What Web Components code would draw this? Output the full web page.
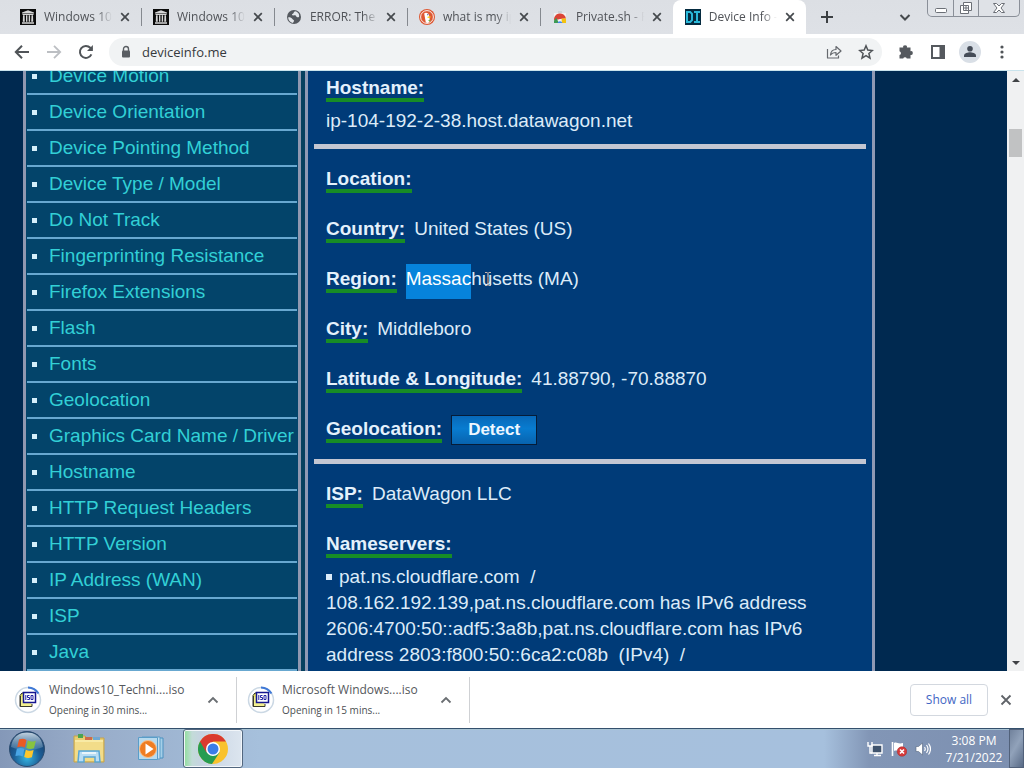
<!DOCTYPE html>
<html lang="en">
<head>
<meta charset="utf-8">
<title>Device Info</title>
<style>
html, body { margin: 0; height: 100%; }
body { font-family: "Open Sans", "Noto Sans", sans-serif; overflow: hidden; background: #002850; }
</style>
</head>
<body>
<desktop-screen></desktop-screen>
<script>
const BUTTON_RESET = `button { font: inherit; color: inherit; background: none; border: 0; padding: 0; margin: 0; }`;

function define(name, render) {
  customElements.define(name, class extends HTMLElement {
    connectedCallback() {
      if (this.shadowRoot) return;
      const template = document.createElement('template');
      template.innerHTML = render(this);
      this.attachShadow({ mode: 'open' }).append(template.content.cloneNode(true));
    }
  });
}

const ICONS = {
  archive: `<svg viewBox="0 0 16 16" width="16" height="16"><rect width="16" height="16" fill="#0b0b0b"/><g fill="#d6d6d6"><path d="M8 1.2 14 3.6V4.4H2V3.6z"/><path d="M2.5 5h11v1h-11zM3 6.3h1.6l.2 6.4H2.8zM6 6.3h1.4v6.4H6zM8.7 6.3h1.4v6.4H8.7zM11.5 6.3H13l.2 6.4h-2zM2 13.3h12v1.5H2z"/></g></svg>`,
  globe: `<svg viewBox="0 0 16 16" width="16" height="16"><circle cx="8" cy="8" r="7" fill="#55595f"/><path d="M9 2.2c-1.8.8-.9 2.3-2.6 2.8-.8.3-.3 1.6.8 1.5 1.4-.2 2.7-.3 3 .7.3 1 1.5 1.4 2.8.9.8-3-.9-5.2-4-5.9zM2.2 8.3c1.5-.2 3.4.2 4.2 1.6.5 1 2 .8 1.7 2.2-.3 1-1.2 1-.9 1.9-3-.3-5-2.7-5-5.7z" fill="#e3e6ea"/></svg>`,
  duck: `<svg viewBox="0 0 16 16" width="16" height="16"><circle cx="8" cy="8" r="8" fill="#de5833"/><circle cx="8" cy="8" r="6.4" fill="none" stroke="#fff" stroke-width=".9"/><path d="M5.2 4.5c1-1.6 4.6-1 4.9 2l.3 2.2c1 4-.5 4.8-1.7 5.2L6.8 13.6z" fill="#fff"/><path d="M8.5 7.8c1.5-.5 3-.3 3.4 0 .2.5-1.3 1.2-3.2 1.2z" fill="#fdd20a"/><circle cx="8.8" cy="5.7" r=".6" fill="#2d4f8e"/><path d="m9 11.2 2.2-.8v2.3z" fill="#65bc46"/></svg>`,
  store: `<svg viewBox="0 0 16 16" width="16" height="16"><path d="M2 4h12v10H2z" fill="#f1f1f1"/><path d="M6 2h4v2H6z" fill="#cfd2d6"/><path d="M2 11.5A6 6 0 0 1 14 9.5L8 10z" fill="#db4437"/><path d="M2 14v-2.5l2.2-2.8L7 14z" fill="#3d9a53"/><path d="M14 14V9.5H9.5L10 14z" fill="#f4c20d"/><path d="M5.5 14a2.7 2.7 0 0 1 5 0z" fill="#4285f4"/></svg>`,
  device: `<svg viewBox="0 0 16 16" width="16" height="16"><rect width="16" height="16" fill="#052b40"/><path d="M1 2h4.600L8 4.500v7L5.600 14H1zM3 4v8h1.800l1.200-1.200V5.200L4.800 4zM9 2h6v2h-2v8h2v2H9v-2h2V4H9z" fill="#2bb9da" fill-rule="evenodd"/></svg>`,
  close: `<svg viewBox="0 0 10 10" width="10" height="10"><path d="m1.200 1.200 7.600 7.600m0-7.600L1.200 8.800" stroke="currentColor" stroke-width="1.700" fill="none"/></svg>`,
  bigclose: `<svg viewBox="0 0 12 12" width="12" height="12"><path d="m1.500 1.500 9 9m0-9-9 9" stroke="#5f6368" stroke-width="1.800" fill="none"/></svg>`,
  plus: `<svg viewBox="0 0 14 14" width="14" height="14"><path d="M7 1v12M1 7h12" stroke="#3c4043" stroke-width="2"/></svg>`,
  down: `<svg viewBox="0 0 12 12" width="12" height="12"><path d="m1.500 4 4.500 4.500L10.500 4" stroke="#45494d" stroke-width="2" fill="none"/></svg>`,
  up: `<svg viewBox="0 0 12 12" width="12" height="12"><path d="M1.500 8.500 6 4l4.500 4.500" stroke="#6a6e72" stroke-width="1.800" fill="none"/></svg>`,
  back: `<svg viewBox="0 0 16 16" width="16" height="16"><path d="M15 8H2.500M8 1.800 1.800 8 8 14.200" stroke="#505458" stroke-width="2" fill="none"/></svg>`,
  forward: `<svg viewBox="0 0 16 16" width="16" height="16"><path d="M1 8h12.500M8 1.800 14.200 8 8 14.200" stroke="#bcbfc3" stroke-width="1.800" fill="none"/></svg>`,
  reload: `<svg viewBox="0 0 16 16" width="16" height="16"><path d="M13.400 10.400A6 6 0 1 1 12.300 3.800L14 5.500" stroke="#505458" stroke-width="2" fill="none"/><path d="M14.900 1v6H9z" fill="#505458"/></svg>`,
  lock: `<svg viewBox="0 0 10 14" width="10" height="14"><path d="M2.500 6V4a2.500 2.500 0 0 1 5 0v2" stroke="#5a5e63" stroke-width="1.400" fill="none"/><rect x="1" y="5.500" width="8" height="7" rx="1" fill="#5a5e63"/></svg>`,
  share: `<svg viewBox="0 0 16 16" width="16" height="16"><path d="M1.500 5v9h11v-2.500M4.500 11c.3-3.500 2.200-5.400 5.500-5.500V2.500l5 4.500-5 4.300V8.500c-2.500 0-4.200.7-5.500 2.500z" stroke="#66696e" stroke-width="1.200" fill="none" stroke-linejoin="round"/></svg>`,
  star: `<svg viewBox="0 0 16 16" width="16" height="16"><path d="m8 1.800 1.800 4.300 4.600.4-3.500 3 1.100 4.600L8 11.700l-4 2.400 1.100-4.600-3.500-3 4.600-.4z" stroke="#505458" stroke-width="1.500" fill="none"/></svg>`,
  puzzle: `<svg viewBox="0 0 16 16" width="16" height="16"><path d="M1.500 3.500h3.700a1.900 1.900 0 1 1 3.700 0h3.600v3.700a1.900 1.900 0 1 1 0 3.700v3.600H8.800a1.900 1.900 0 0 0-3.600 0H1.500V11a1.900 1.900 0 0 0 0-3.700z" fill="#55595e"/></svg>`,
  panel: `<svg viewBox="0 0 14 14" width="14" height="14"><path d="M1 1h12v12H1z" stroke="#55595e" stroke-width="2" fill="none"/><path d="M8.500 1H13v12H8.500z" fill="#55595e"/></svg>`,
  avatar: `<svg viewBox="0 0 22 22" width="22" height="22"><circle cx="11" cy="11" r="11" fill="#d9dfe6"/><circle cx="11" cy="7.800" r="2.800" fill="#454c57"/><path d="M5 16v-1.500c0-2 4-3.200 6-3.200s6 1.200 6 3.200V16z" fill="#454c57"/></svg>`,
  dots: `<svg viewBox="0 0 4 14" width="4" height="14"><g fill="#505458"><circle cx="2" cy="2" r="1.600"/><circle cx="2" cy="7" r="1.600"/><circle cx="2" cy="12" r="1.600"/></g></svg>`,
  minimize: `<svg viewBox="0 0 14 14" width="14" height="14"><rect x="1.500" y="7.500" width="11" height="4" rx="1" fill="#fff" stroke="#6b6f76"/></svg>`,
  restore: `<svg viewBox="0 0 14 14" width="14" height="14"><path d="M4.500 1.500h8v8h-3v3h-8v-8h3z" fill="#fff" stroke="#6b6f76"/><path d="M4.500 4.500h5v5h-5zM6 6h2v2H6z" fill="none" stroke="#6b6f76"/></svg>`,
  shut: `<svg viewBox="0 0 14 12" width="14" height="12"><path d="M1.500 1.500h3L7 4l2.500-2.500h3L9 6l3.500 4.500h-3L7 8l-2.500 2.500h-3L5 6z" fill="#fff" stroke="#6b6f76"/></svg>`,
  iso: `<svg viewBox="0 0 28 28" width="28" height="28"><circle cx="14" cy="14" r="12.500" fill="#fff" stroke="#cbd8e4" stroke-width="1.500"/><path d="M14 1.500A12.500 12.500 0 0 1 24.500 7.500" fill="none" stroke="#3f79d6" stroke-width="2"/><path d="M6 9.500 8 7h3v13.500H6z" fill="#e9e45c" stroke="#2c2c25"/><path d="M6.500 10v10.500H18V18" fill="#f3f08e" stroke="#3a3a2c"/><rect x="9.500" y="6.500" width="12" height="10" fill="#fff" stroke="#16168f" stroke-width="1.500"/><path d="M11.800 9v5m3.700-4.500h-2v2h2v2h-2.200m3.700-4h2v4h-2z" stroke="#2222a5" fill="none"/></svg>`,
  start: `<svg viewBox="0 0 38 38" width="38" height="38"><defs><radialGradient id="orb" cx=".5" cy=".75" r=".75"><stop offset="0" stop-color="#35b5e2"/><stop offset=".5" stop-color="#1c5e96"/><stop offset="1" stop-color="#173862"/></radialGradient><linearGradient id="gloss" x2="0" y2="1"><stop offset="0" stop-color="#dfecf5" stop-opacity=".85"/><stop offset="1" stop-color="#a8c8dc" stop-opacity=".2"/></linearGradient></defs><circle cx="19" cy="19" r="17.500" fill="url(#orb)" stroke="#2b4c70"/><path d="M3 17C4 7 11 2.500 19 2.500S34 7 35 17c-9 4-23 4-32 0z" fill="url(#gloss)"/><path d="M11 9.500c3-1.200 5-1 7.500.4l-1.700 7.600c-2.300-1.300-4.500-1.500-7.600-.3z" fill="#ea5a25"/><path d="M19.800 10.500c2.600 1.300 4.600 1.400 8 .2L26 18.200c-3 1.200-5.200 1-7.700-.2z" fill="#87c340"/><path d="M8.800 18.700c3-1.200 5.300-1 7.600.3L14.700 26.500c-2.400-1.300-4.500-1.400-7.300-.4z" fill="#49a5e5"/><path d="M17.800 19.700c2.500 1.200 4.700 1.400 7.800.2L23.900 27.300c-3 1.200-5.200 1-7.700-.3z" fill="#fdc72c"/></svg>`,
  explorer: `<svg viewBox="0 0 34 32" width="34" height="32"><path d="M2 3h11l2 2h17v24H2z" fill="#e8cd71" stroke="#c5a34b"/><path d="M6 1h5v4H6z" fill="#4aa352"/><path d="M13 4h7v3h-7z" fill="#ce6b4b"/><path d="M21 4h7v4h-7z" fill="#70a8d2"/><path d="M3 7h28v12H3z" fill="#f8eaa5"/><path d="M3 9h28v19H3z" fill="#f2dc89"/><path d="M7 18h20l1 11h-5v-5H12v5H6z" fill="#b9ddf3" stroke="#58a6d6" stroke-width="1.500"/><path d="M10 20h14" stroke="#e9f5fb" stroke-width="2"/></svg>`,
  player: `<svg viewBox="0 0 28 28" width="28" height="28"><path d="M8 3h18v20H8z" fill="#a5cfe8" stroke="#4b91c0"/><path d="M5 2h18v22H5z" fill="#c3e0f1" stroke="#5a9dc8"/><path d="M1.500 2.500h19v22h-19z" fill="#b7daee" stroke="#5a9dc8"/><circle cx="11" cy="14" r="8.500" fill="#ef7d22" stroke="#f6c18e"/><path d="m8.500 8.500 8 5.500-8 5.500z" fill="#fff"/></svg>`,
  chrome: `<svg viewBox="0 0 30 30" width="30" height="30"><circle cx="15" cy="15" r="15" fill="#f9c22d"/><path d="M15 15 2 7.500A15 15 0 0 0 14 30L21.500 18.500z" fill="#269c51"/><path d="M2 7.500A15 15 0 0 1 28 7.500H15l-6.500 11z" fill="#da3a2f"/><circle cx="15" cy="15" r="7" fill="#fff"/><circle cx="15" cy="15" r="5.500" fill="#3b7de8"/></svg>`,
  network: `<svg viewBox="0 0 16 16" width="16" height="16"><path d="M5 4h10v8H5z" fill="#40546e" stroke="#fff" stroke-width="1.400"/><path d="M7 14.500h7M10 12v3M1 1v4h4V1M3 5v7h2" stroke="#fff" stroke-width="1.400" fill="none"/></svg>`,
  flag: `<svg viewBox="0 0 16 16" width="16" height="16"><path d="M1.500 1v14" stroke="#fff" stroke-width="1.600"/><path d="M3 2c3-1.500 4 1.500 9 0v8c-4 1.200-6-1.500-9 0z" fill="#fff"/><circle cx="11" cy="10.500" r="4.800" fill="#d63a3a" stroke="#a52a2a" stroke-width=".5"/><path d="m9 8.500 4 4m0-4-4 4" stroke="#fff" stroke-width="1.600"/></svg>`,
  sound: `<svg viewBox="0 0 16 16" width="16" height="16"><path d="M1 5.500h2.500L7.500 2v12l-4-3.500H1z" fill="#fff" stroke="#54657e" stroke-width=".6"/><path d="M9.500 6q1.500 2 0 4M11.500 4q3 4 0 8M13.500 2.500q4 5.500 0 11" stroke="#fff" fill="none" stroke-width="1.200"/></svg>`,
  cursor: `<svg viewBox="0 0 8 16" width="8" height="16"><path d="M1 1.500h2.500M4.500 1.500H7M4 2v12M1 14.500h2.500M4.500 14.500H7" stroke="#c9b8b0" stroke-width="1.200"/><path d="M4 6v6" stroke="#8a5340"/></svg>`
};

define('ui-icon', el => `<style>:host{display:inline-flex;flex:none}svg{display:block}</style>${ICONS[el.getAttribute('name')]}`);

define('icon-button', el => `
<style>
${BUTTON_RESET}
:host { display: flex; flex: none; width: 32px; height: 28px; }
button { display: flex; align-items: center; justify-content: center; width: 100%; height: 100%; }
</style>
<button type="button" aria-label="${el.getAttribute('label')}"><ui-icon name="${el.getAttribute('icon')}"></ui-icon></button>`);

define('browser-tab', el => `
<style>
${BUTTON_RESET}
:host { display: flex; align-items: center; box-sizing: border-box; flex: 0 1 133px; min-width: 0; height: 34px; padding: 0 11px 0 12px; position: relative; color: #505358; font-size: 12px; }
:host(:not([active]):not([last]))::after { content: ""; position: absolute; right: -1px; top: 8px; height: 18px; width: 1px; background: #85898f; }
:host([active]) { background: #fff; border-radius: 8px 8px 0 0; }
.title { flex: 1; min-width: 0; margin: 0 8px 0 8px; text-align: left; line-height: 18px; white-space: nowrap; overflow: hidden; -webkit-mask-image: linear-gradient(to right, #000 78%, transparent); mask-image: linear-gradient(to right, #000 78%, transparent); }
.close { display: flex; color: #45494d; }
</style>
<ui-icon name="${el.getAttribute('icon')}"></ui-icon>
<button type="button" class="title"><slot></slot></button>
<button type="button" class="close" aria-label="Close tab"><ui-icon name="close"></ui-icon></button>`);

define('window-controls', () => `
<style>
${BUTTON_RESET}
:host { display: flex; box-sizing: border-box; height: 17px; border: 1px solid #8a8f98; border-top: 0; border-radius: 0 0 5px 5px; background: #dfe2e7; }
button { display: flex; align-items: center; justify-content: center; width: 25px; }
button + button { border-left: 1px solid #8a8f98; }
button:last-child { width: 41px; }
</style>
<button type="button" aria-label="Minimize"><ui-icon name="minimize"></ui-icon></button>
<button type="button" aria-label="Restore"><ui-icon name="restore"></ui-icon></button>
<button type="button" aria-label="Close"><ui-icon name="shut"></ui-icon></button>`);

define('tab-strip', () => `
<style>
:host { display: flex; height: 34px; padding: 0 4px 0 8px; background: linear-gradient(#dcdfe4, #dee1e6); }
.tabs { display: flex; min-width: 0; }
.new { margin-left: 5px; align-self: center; }
.search { margin-left: auto; align-self: center; margin-right: 6px; }
</style>
<div class="tabs">
<browser-tab icon="archive">Windows 10</browser-tab>
<browser-tab icon="archive">Windows 10</browser-tab>
<browser-tab icon="globe">ERROR: The r</browser-tab>
<browser-tab icon="duck">what is my ip</browser-tab>
<browser-tab icon="store" last>Private.sh - P</browser-tab>
<browser-tab icon="device" active>Device Info -</browser-tab>
</div>
<icon-button class="new" icon="plus" label="New tab"></icon-button>
<icon-button class="search" icon="down" label="Search tabs"></icon-button>
<window-controls></window-controls>`);

define('address-bar', () => `
<style>
:host { display: flex; align-items: center; height: 36px; padding: 0 6px; background: #fff; border-bottom: 1px solid #c9e3ec; }
.box { flex: 1; min-width: 0; display: flex; align-items: center; height: 28px; margin: 0 8px 0 7px; padding-left: 12px; border-radius: 14px; background: #f1f3f4; }
input { flex: 1; min-width: 0; height: 28px; border: 0; padding: 0; margin-left: 11px; background: none; outline: 0; font: 13px/20px "Open Sans", sans-serif; color: #36393d; }
</style>
<icon-button icon="back" label="Back"></icon-button>
<icon-button icon="forward" label="Forward"></icon-button>
<icon-button icon="reload" label="Reload"></icon-button>
<div class="box">
<ui-icon name="lock"></ui-icon>
<input type="text" aria-label="Address" value="deviceinfo.me">
<icon-button icon="share" label="Share"></icon-button>
<icon-button icon="star" label="Bookmark"></icon-button>
</div>
<icon-button icon="puzzle" label="Extensions"></icon-button>
<icon-button icon="panel" label="Side panel"></icon-button>
<icon-button icon="avatar" label="Profile"></icon-button>
<icon-button icon="dots" label="Menu"></icon-button>`);

const TOPICS = ['Device Motion', 'Device Orientation', 'Device Pointing Method', 'Device Type / Model', 'Do Not Track', 'Fingerprinting Resistance', 'Firefox Extensions', 'Flash', 'Fonts', 'Geolocation', 'Graphics Card Name / Driver', 'Hostname', 'HTTP Request Headers', 'HTTP Version', 'IP Address (WAN)', 'ISP', 'Java'];

define('topic-list', () => `
<style>
:host { display: block; box-sizing: border-box; width: 278px; border: solid #9098b0; border-width: 0 3px; background: #03446a; }
ul { list-style: none; margin: 0; padding: 0 1px; }
li { display: flex; align-items: center; height: 34px; padding-left: 5px; border-bottom: 2px solid #68a8d0; white-space: nowrap; }
li::before { content: ""; width: 5px; height: 5px; margin-right: 12px; background: #d5effa; }
a { color: #32d0d6; text-decoration: none; line-height: 26px; }
</style>
<nav aria-label="Topics"><ul>${TOPICS.map(t => `<li><a href="#">${t}</a></li>`).join('')}</ul></nav>`);

define('data-field', el => `
<style>
:host { display: block; padding: 12px 12px; line-height: 26px; }
:host([stacked]) { padding-bottom: 7px; }
b { border-bottom: 4px solid #178c26; margin-right: 9px; color: #e4f1fc; }
</style>
<b>${el.getAttribute('label')}:</b><slot></slot>`);

define('section-rule', () => `<style>:host{display:block;height:5px;margin:5px 0;background:#c3c6d2}</style>`);

define('text-selection', () => `<style>:host{padding:4px 0 10px;background:#0683db;color:#fff}</style><slot></slot>`);

define('pointer-mark', () => `<style>:host{position:relative}ui-icon{position:absolute;left:13px;top:3px}</style><ui-icon name="cursor"></ui-icon>`);

define('detect-button', () => `
<style>
:host { display: inline-block; height: 26px; vertical-align: top; }
button { box-sizing: border-box; height: 30px; margin: -2px 0 0; padding: 0 16px; border: 1px solid #061c38; background: linear-gradient(#0868b8, #087cd0 45%, #0863ae); color: #eef7ff; font: bold 17px/26px "Liberation Sans", sans-serif; }
</style><button type="button"><slot></slot></button>`);

define('device-report', () => `
<style>
:host { display: block; box-sizing: border-box; flex: 0 1 570px; min-width: 0; padding: 4px 6px 0; border: solid #8f99b4; border-width: 0 3px; background: #003b78; color: #dcebf8; }
.value { margin: 0; padding: 0 12px 5px; line-height: 26px; }
ul { list-style: none; margin: 0; padding: 0 48px 0 12px; line-height: 26px; }
li::before { content: ""; display: inline-block; width: 6px; height: 6px; margin-right: 7px; vertical-align: 3px; background: #dcebf8; }
</style>
<data-field label="Hostname" stacked></data-field>
<p class="value">ip-104-192-2-38.host.datawagon.net</p>
<section-rule></section-rule>
<data-field label="Location"></data-field>
<data-field label="Country">United States (US)</data-field>
<data-field label="Region"><text-selection>Massac</text-selection><pointer-mark></pointer-mark>husetts (MA)</data-field>
<data-field label="City">Middleboro</data-field>
<data-field label="Latitude &amp; Longitude">41.88790, -70.88870</data-field>
<data-field label="Geolocation"><detect-button>Detect</detect-button></data-field>
<section-rule></section-rule>
<data-field label="ISP">DataWagon LLC</data-field>
<data-field label="Nameservers" stacked></data-field>
<ul><li>pat.ns.cloudflare.com&nbsp; / 108.162.192.139,pat.ns.cloudflare.com has IPv6 address 2606:4700:50::adf5:3a8b,pat.ns.cloudflare.com has IPv6 address 2803:f800:50::6ca2:c08b&nbsp; (IPv4)&nbsp; /</li></ul>`);

define('scroll-track', () => `
<style>
:host { display: flex; flex-direction: column; align-items: center; width: 17px; box-sizing: border-box; padding: 7px 0 6px; background: #f0f1f2; }
.up, .down { width: 0; border: 4px solid transparent; border-top: 0; border-bottom: 4px solid #404346; }
.down { margin-top: auto; border-bottom: 0; border-top: 4px solid #404346; }
.thumb { width: 13px; height: 28px; margin-top: 47px; background: #c1c2c3; }
</style><div class="up"></div><div class="thumb"></div><div class="down"></div>`);

define('web-page', () => `
<style>
:host { display: flex; flex: 1; min-height: 0; overflow: hidden; background: #002950; font: 19px "Liberation Sans", Arial, sans-serif; }
.scroller { flex: 1; min-width: 0; overflow: hidden; display: flex; padding-left: 23px; }
.layout { display: flex; flex: 0 1 852px; min-width: 0; gap: 4px; align-self: flex-start; margin-top: -12px; background: #06405f; }
topic-list { flex: none; }
</style>
<div class="scroller"><div class="layout"><topic-list></topic-list><device-report></device-report></div></div>
<scroll-track></scroll-track>`);

define('download-item', el => `
<style>
:host { display: flex; align-items: center; box-sizing: border-box; width: 233px; height: 46px; padding: 0 7px 0 10px; border-right: 1px solid #cfd1d4; }
.text { flex: 1; margin-left: 7px; margin-top: 1px; white-space: nowrap; }
.name { font-size: 12px; line-height: 20px; color: #55585c; }
.state { font-size: 10px; line-height: 20px; color: #4c4f53; }
</style>
<ui-icon name="iso"></ui-icon>
<div class="text"><div class="name"><slot></slot></div><div class="state">${el.getAttribute('state')}</div></div>
<icon-button icon="up" label="Download options"></icon-button>`);

define('download-shelf', () => `
<style>
${BUTTON_RESET}
:host { display: flex; align-items: center; box-sizing: border-box; height: 57px; padding: 0 2px 0 4px; background: #fff; }
.all { margin: 0 2px 0 auto; box-sizing: border-box; height: 32px; width: 78px; border: 1px solid #d3d8df; border-radius: 4px; color: #3f66c4; font-size: 12px; }
</style>
<download-item state="Opening in 30 mins...">Windows10_Techni....iso</download-item>
<download-item state="Opening in 15 mins...">Microsoft Windows....iso</download-item>
<button type="button" class="all">Show all</button>
<icon-button icon="bigclose" label="Close downloads"></icon-button>`);

define('task-bar', () => `
<style>
${BUTTON_RESET}
:host { display: flex; align-items: center; box-sizing: border-box; height: 40px; padding-left: 8px; border-top: 1px solid #34506c; background: linear-gradient(to right, #8498b8, #97abc8 80px, #a6c0dc 260px, #a6c0dd calc(100% - 200px), #8296b6 calc(100% - 155px), #7c8fb0); box-shadow: inset 0 1px #a9c4d4; color: #fff; }
button { display: flex; align-items: center; justify-content: center; }
.explorer { margin-left: 26px; }
.player { margin-left: 31px; }
.chrome { width: 60px; height: 39px; box-sizing: border-box; margin-left: 18px; border: 1px solid #52677f; border-radius: 3px; background: linear-gradient(to right, #8edf9a, #c3dbd8 14%, #c6d3e2 30%, #dce5ef); box-shadow: inset 0 0 0 1px #f2f6fa; }
.tray { display: flex; gap: 8px; margin-left: auto; }
time { box-sizing: border-box; width: 78px; padding-left: 8px; text-align: center; font-size: 12px; line-height: 17px; }
.desktop { width: 15px; height: 39px; box-sizing: border-box; border: 1px solid #51617a; background: linear-gradient(120deg, #71829c, #91a2ba 45%, #586a86); }
</style>
<button type="button" aria-label="Start"><ui-icon name="start"></ui-icon></button>
<button type="button" class="explorer" aria-label="Windows Explorer"><ui-icon name="explorer"></ui-icon></button>
<button type="button" class="player" aria-label="Media Player"><ui-icon name="player"></ui-icon></button>
<button type="button" class="chrome" aria-label="Chrome"><ui-icon name="chrome"></ui-icon></button>
<div class="tray"><ui-icon name="network"></ui-icon><ui-icon name="flag"></ui-icon><ui-icon name="sound"></ui-icon></div>
<time>3:08 PM<br>7/21/2022</time>
<button type="button" class="desktop" aria-label="Show desktop"></button>`);

define('desktop-screen', () => `
<style>
:host { display: flex; flex-direction: column; height: 100vh; }
</style>
<tab-strip></tab-strip>
<address-bar></address-bar>
<web-page></web-page>
<download-shelf></download-shelf>
<task-bar></task-bar>`);
</script>
</body>
</html>
